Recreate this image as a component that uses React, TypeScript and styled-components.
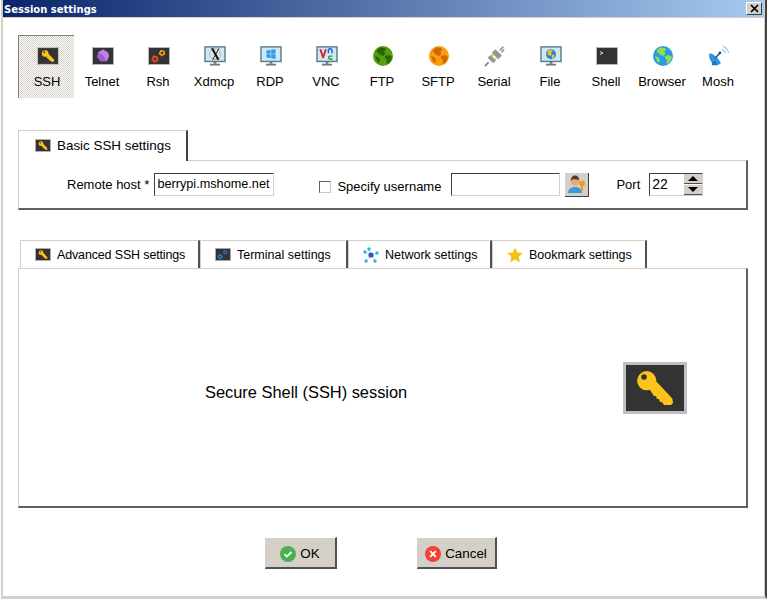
import React from "react";
import styled, { createGlobalStyle } from "styled-components";

const Global = createGlobalStyle`
  html, body { margin: 0; padding: 0; background: #fff; }
  body { font-family: "Liberation Sans", Arial, sans-serif; color: #000; }
`;

const Win = styled.div`
  width: 766px;
  height: 599px;
  margin-left: 1px;
  box-sizing: border-box;
  overflow: hidden;
  background: #fff;
  border-left: 2px solid #d4d0c8;
  border-right: 2px solid #404040;
  border-bottom: 3px solid #d4d0c8;
  display: flex;
  flex-direction: column;
`;

const TitleBar = styled.div`
  height: 18px;
  flex: none;
  box-sizing: border-box;
  margin-left: -1px;
  padding-left: 2px;
  background: linear-gradient(90deg, #0a246a, #a6caf0);
  border-bottom: 1px solid #d4d0c8;
  border-right: 1px solid #d4d0c8;
  display: flex;
  align-items: center;
  justify-content: space-between;
  color: #fff;
  font: bold 10px "DejaVu Sans", sans-serif;
`;

const TitleText = styled.span`
  margin-top: 1px;
`;

const CloseBtn = styled.div`
  width: 16px;
  height: 13px;
  margin-right: 2px;
  box-sizing: border-box;
  background: #d4d0c8;
  border: 1px solid;
  border-color: #fff #404040 #404040 #fff;
  display: flex;
  align-items: center;
  justify-content: center;
`;

const Content = styled.div`
  padding: 17px 0 0 15px;
  display: flex;
  flex-direction: column;
  flex: 1;
  border-right: 1px solid #d4d0c8;
`;

const Toolbar = styled.div`
  display: flex;
  height: 63px;
`;

const ToolItem = styled.div<{ $on?: boolean }>`
  width: 56px;
  box-sizing: border-box;
  height: 63px;
  padding-top: ${(p) => (p.$on ? 10 : 11)}px;
  display: flex;
  flex-direction: column;
  align-items: center;
  font-size: 13px;
  ${(p) =>
    p.$on
      ? `border-left: 1px solid #808080; border-top: 1px solid #808080;
         padding-left: 1px;
         background-color:#fff;
         background-image: conic-gradient(#d4d0c8 25%, #fff 0 50%, #d4d0c8 0 75%, #fff 0);
         background-size: 2px 2px;`
      : ""}
`;

const ToolIcon = styled.div`
  width: 24px;
  height: 20px;
  margin-left: 1px;
  display: flex;
  align-items: center;
  justify-content: center;
  svg { flex: none; }
`;

const ToolLabel = styled.div`
  margin-top: 8px;
  line-height: 16px;
  white-space: nowrap;
`;

const BasicTab = styled.div`
  margin-top: 32px;
  width: 170px;
  height: 31px;
  box-sizing: border-box;
  background: #fff;
  border-top: 1px solid #d4d0c8;
  border-left: 1px solid #d4d0c8;
  border-right: 2px solid #404040;
  display: flex;
  align-items: center;
  padding: 0 0 2px 16px;
  gap: 6px;
  font-size: 13.4px;
  position: relative;
  z-index: 1;
  margin-bottom: -1px;
`;

const BasicPanel = styled.div`
  width: 730px;
  height: 50px;
  box-sizing: border-box;
  border-top: 1px solid #d4d0c8;
  border-left: 1px solid #d4d0c8;
  border-right: 2px solid #606060;
  border-bottom: 2px solid #606060;
  display: flex;
  align-items: center;
  font-size: 13px;
`;

const FieldLabel = styled.span<{ $left: number; $right: number; $low?: boolean }>`
  margin-left: ${(p) => p.$left}px;
  margin-right: ${(p) => p.$right}px;
  margin-top: ${(p) => (p.$low ? 4 : 0)}px;
  white-space: nowrap;
`;

const SunkenInput = styled.div<{ $w: number }>`
  width: ${(p) => p.$w}px;
  height: 23px;
  box-sizing: border-box;
  border: 1px solid;
  border-color: #404040 #d4d0c8 #d4d0c8 #404040;
  padding-left: 2px;
  line-height: 20px;
  font-size: 12.7px;
  overflow: hidden;
  white-space: nowrap;
  background: #fff;
`;

const CheckBox = styled.div`
  width: 12px;
  height: 12px;
  margin-left: 45px;
  margin-right: 6px;
  margin-top: 4px;
  box-sizing: border-box;
  border: 1px solid;
  border-color: #606060 #c8c8c8 #c8c8c8 #606060;
`;

const UserBtn = styled.div`
  width: 24px;
  height: 24px;
  margin-left: 5px;
  box-sizing: border-box;
  background: #d4d0c8;
  border-right: 1px solid #404040;
  border-bottom: 1px solid #404040;
  display: flex;
  align-items: center;
  justify-content: center;
`;

const Spin = styled.div`
  width: 54px;
  height: 23px;
  box-sizing: border-box;
  border: 1px solid;
  border-color: #404040 #d4d0c8 #d4d0c8 #404040;
  display: flex;
  justify-content: space-between;
  padding-left: 2px;
  line-height: 20px;
  font-size: 14px;
`;

const SpinArrows = styled.div`
  width: 18px;
  display: flex;
  flex-direction: column;
  gap: 1px;
`;

const SpinBtn = styled.div`
  flex: 1;
  background: #d4d0c8;
  border-bottom: 1px solid #505050;
  display: flex;
  align-items: center;
  justify-content: center;
`;

const TabRow = styled.div`
  margin-top: 30px;
  margin-left: 2px;
  display: flex;
  height: 28px;
`;

const SettingTab = styled.div<{ $w: number; $tight?: boolean }>`
  width: ${(p) => p.$w}px;
  height: 28px;
  box-sizing: border-box;
  background: #fff;
  border-top: 1px solid #d4d0c8;
  border-left: 1px solid #d4d0c8;
  border-right: 2px solid #505050;
  display: flex;
  align-items: center;
  padding-left: 14px;
  gap: 6px;
  font-size: 12.5px;
  letter-spacing: ${(p) => (p.$tight ? "-0.15px" : "0")};
  white-space: nowrap;
`;

const MainPanel = styled.div`
  width: 730px;
  height: 240px;
  box-sizing: border-box;
  border-top: 1px solid #d4d0c8;
  border-left: 1px solid #d4d0c8;
  border-right: 2px solid #606060;
  border-bottom: 2px solid #606060;
  display: flex;
  align-items: center;
  justify-content: space-between;
  padding: 0 59px 0 186px;
`;

const MainText = styled.div`
  font-size: 16.4px;
  margin-top: 10px;
`;

const Footer = styled.div`
  display: flex;
  justify-content: center;
  gap: 80px;
  margin-top: 29px;
  padding-right: 21px;
`;

const ActionBtn = styled.div<{ $w: number }>`
  width: ${(p) => p.$w}px;
  height: 32px;
  box-sizing: border-box;
  background: #d4d0c8;
  border-top: 1px solid #fff;
  border-left: 1px solid #d4d0c8;
  border-right: 2px solid #505050;
  border-bottom: 2px solid #505050;
  padding-top: 2px;
  display: flex;
  align-items: center;
  justify-content: center;
  gap: 4px;
  font-size: 13.4px;
`;

const KeyBox = ({ size, h }: { size: number; h: number }) => (
  <svg width={size} height={h} viewBox="0 0 64 52">
    <rect x="1.5" y="1.5" width="61" height="49" fill="#333" stroke="#c0c0c0" strokeWidth="3" />
    <circle cx="23.7" cy="18.7" r="9.6" fill="#fdc31c" />
    <path d="M31 17L49.3 36.5 50 41 48 43H41L39 40H37L36 37H34L33 34H31L27 28Z" fill="#fdc31c" />
    <circle cx="21" cy="15" r="2.8" fill="#333" />
  </svg>
);

const Gear = ({ cx, cy, r, c }: { cx: number; cy: number; r: number; c: string }) => (
  <g>
    <circle cx={cx} cy={cy} r={r * 0.62} fill="none" stroke={c} strokeWidth={r * 0.5} />
    <circle cx={cx} cy={cy} r={r * 0.85} fill="none" stroke={c} strokeWidth={r * 0.34} strokeDasharray={`${r * 0.55} ${r * 0.55}`} />
  </g>
);

const Monitor = ({ children }: { children: React.ReactNode }) => (
  <svg width="22" height="20" viewBox="0 0 24 22">
    <rect x="1" y="1" width="22" height="16" fill="#cfe8f8" stroke="#5f7a88" strokeWidth="1.6" />
    <rect x="10.5" y="17" width="3" height="2.5" fill="#5f7a88" />
    <rect x="6.5" y="19.5" width="11" height="2" fill="#5f7a88" />
    {children}
  </svg>
);

const Globe = ({ c, land }: { c: string; land: string }) => (
  <svg width="20" height="20" viewBox="0 0 20 20">
    <circle cx="10" cy="10" r="10" fill={c} />
    <path d="M7 1.5l5 .5 1 2-2 1.5 1.5 2-2 2.5-3-1-3-2.5-1-2Z M12 10l4-1 3 2-1.5 4-2.5 3-1.5-1 .5-3-2-2Z M2 10l3 1 2 3-1 3-2-2Z" fill={land} />
  </svg>
);

const GearsIcon = ({ a, b, w = 22, h = 18 }: { a: string; b: string; w?: number; h?: number }) => (
  <svg width={w} height={h} viewBox="0 0 22 18">
    <rect x=".5" y=".5" width="21" height="17" fill="#333" stroke="#b8b8b8" />
    <Gear cx={7} cy={12} r={3.6} c={a} />
    <Gear cx={14} cy={6} r={3.2} c={b} />
  </svg>
);

const tools: [string, React.ReactNode][] = [
  ["SSH", <KeyBox size={22} h={18} />],
  [
    "Telnet",
    <svg width="22" height="18" viewBox="0 0 22 18">
      <rect x=".5" y=".5" width="21" height="17" fill="#333" stroke="#b8b8b8" />
      <path d="M11 2.5l5 3 1 4-2.5 5H8.5L5 10l1-4.5Z" fill="#a25bd0" />
      <path d="M11 2.5l5 3-4.5 3-5.5-3Z M16 5.5l1 4-2.5 5-3-6Z" fill="#bd82e4" />
    </svg>,
  ],
  ["Rsh", <GearsIcon a="#e4481a" b="#f59a14" />],
  [
    "Xdmcp",
    <Monitor>
      <circle cx="12" cy="9" r="6" fill="none" stroke="#e39a7a" strokeWidth="1" />
      <path d="M7.5 2.5h2.6L17 15h-2.6Z M9 15l7-12.5h1L10 15Z" fill="#111" />
    </Monitor>,
  ],
  [
    "RDP",
    <Monitor>
      <path d="M7 5l4.5-.7v4.2H7Z M12.2 4.2L17 3.5v5h-4.8Z M7 9.2h4.5v4.2L7 12.7Z M12.2 9.2H17v5l-4.8-.7Z" fill="#2f9bf0" />
    </Monitor>,
  ],
  [
    "VNC",
    <Monitor>
      <path d="M3.5 3.5h2.2l2 6 2-6h2.1L8.5 13.5H7Z" fill="#d81e1e" />
      <path d="M13.5 8V5a2 2 0 0 1 4 0v3" fill="none" stroke="#2a4fd0" strokeWidth="1.5" />
      <path d="M18 11.2h-3a1.6 1.6 0 0 0 0 3.1h3" fill="none" stroke="#18a018" strokeWidth="1.5" />
    </Monitor>,
  ],
  ["FTP", <Globe c="#4fa00c" land="#2d6306" />],
  ["SFTP", <Globe c="#ff9a0a" land="#c86a05" />],
  [
    "Serial",
    <svg width="22" height="22" viewBox="0 0 24 24">
      <path d="M1 23l4-4" stroke="#7d8a91" strokeWidth="2" />
      <path d="M4 14l6 6 3-3-6-6Z" fill="#8a979e" />
      <path d="M8.5 8.5l7 7 4-4-7-7Z" fill="#8a979e" />
      <path d="M7.5 11l1.8-1.6 2 2-1.6 1.8Z M11 15.5l2-2 1 1-2 2Z" fill="#f7c21f" />
      <path d="M17 6l4-4M19 8l3-3" stroke="#7d8a91" strokeWidth="1.6" />
    </svg>,
  ],
  [
    "File",
    <Monitor>
      <circle cx="12" cy="9" r="5.5" fill="#2f80d0" />
      <path d="M9 5l4-1 1 2-2 1 1 2-2 2-3-2Z M13 10l3-1-1 4-2 1Z" fill="#f2c42b" />
    </Monitor>,
  ],
  [
    "Shell",
    <svg width="22" height="18" viewBox="0 0 22 18">
      <rect x=".5" y=".5" width="21" height="17" fill="#333" stroke="#b8b8b8" />
      <path d="M4 4.5l3 1.5-3 1.5" fill="none" stroke="#ddd" strokeWidth="1" />
    </svg>,
  ],
  ["Browser", <Globe c="#2b9be8" land="#8fe04c" />],
  [
    "Mosh",
    <svg width="22" height="22" viewBox="0 0 24 24">
      <path d="M2 9c5 1 10 6 12 11-3 3-8 2-10-1S0 12 2 9Z" fill="#2b96e6" />
      <path d="M5 18l-1 4h7l-3-4Z" fill="#2b6fb0" />
      <path d="M8 14l5-5" stroke="#274a80" strokeWidth="1.6" />
      <circle cx="13" cy="8.5" r="1.5" fill="#274a80" />
      <path d="M15 5a5 5 0 0 1 4 4M16 1.5a9 9 0 0 1 6.5 7" fill="none" stroke="#9cc8e8" strokeWidth="1.2" />
    </svg>,
  ],
];

const NetIcon = () => (
  <svg width="16" height="16" viewBox="0 0 16 16">
    <g stroke="#c5d3ec" strokeWidth="1">
      <path d="M8 8L6 2M8 8L14 6M8 8L2 5M8 8L3 14M8 8L12 14" />
    </g>
    <circle cx="8" cy="8" r="2.6" fill="#3f51b5" />
    {[[6, 2], [14, 6], [2, 5], [3, 14], [12, 14]].map(([x, y]) => (
      <circle key={`${x}-${y}`} cx={x} cy={y} r="1.7" fill="#1cbcdc" />
    ))}
  </svg>
);

const StarIcon = () => (
  <svg width="16" height="16" viewBox="0 0 16 16">
    <path d="M8 .5l2.3 5 5.4.6-4 3.7 1.1 5.4L8 12.5 3.2 15.2l1.1-5.4-4-3.7 5.4-.6Z" fill="#f7c20f" />
  </svg>
);

const UserIcon = () => (
  <svg width="20" height="20" viewBox="0 0 20 20">
    <path d="M1 19c0-4 3-6 7-6s7 2 7 6Z" fill="#3a9ae0" />
    <circle cx="8" cy="7.5" r="4.2" fill="#e8a679" />
    <path d="M3.8 7c0-3.5 2-5.5 4.3-5.5s4.2 2 4.2 5.2C11 5 9 5.5 7 5.2 5.5 5 4.5 6 3.8 7Z" fill="#4c3a2e" />
    <circle cx="15" cy="9.5" r="3" fill="#f79a1a" />
    <path d="M14 11h2v6h-2Z" fill="#f79a1a" />
  </svg>
);

const Arrow = ({ up }: { up?: boolean }) => (
  <svg width="10" height="5" viewBox="0 0 10 5">
    <path d={up ? "M0 5L5 0l5 5Z" : "M0 0l5 5 5-5Z"} fill="#000" />
  </svg>
);

const App = () => (
  <Win>
    <Global />
    <TitleBar>
      <TitleText>Session settings</TitleText>
      <CloseBtn>
        <svg width="9" height="9" viewBox="0 0 9 9">
          <path d="M1 1l7 7M8 1L1 8" stroke="#000" strokeWidth="1.7" />
        </svg>
      </CloseBtn>
    </TitleBar>
    <Content>
      <Toolbar>
        {tools.map(([name, icon], i) => (
          <ToolItem key={name} $on={i === 0}>
            <ToolIcon>{icon}</ToolIcon>
            <ToolLabel>{name}</ToolLabel>
          </ToolItem>
        ))}
      </Toolbar>
      <BasicTab>
        <KeyBox size={16} h={13} />
        Basic SSH settings
      </BasicTab>
      <BasicPanel>
        <FieldLabel $left={48} $right={5}>Remote host *</FieldLabel>
        <SunkenInput $w={120}>berrypi.mshome.net</SunkenInput>
        <CheckBox />
        <FieldLabel $left={0} $right={10} $low>Specify username</FieldLabel>
        <SunkenInput $w={109} />
        <UserBtn><UserIcon /></UserBtn>
        <FieldLabel $left={27} $right={9}>Port</FieldLabel>
        <Spin>
          22
          <SpinArrows>
            <SpinBtn><Arrow up /></SpinBtn>
            <SpinBtn><Arrow /></SpinBtn>
          </SpinArrows>
        </Spin>
      </BasicPanel>
      <TabRow>
        <SettingTab $w={180} $tight><KeyBox size={16} h={13} />Advanced SSH settings</SettingTab>
        <SettingTab $w={148}><GearsIcon a="#2f7fd8" b="#3f63c8" w={16} h={13} />Terminal settings</SettingTab>
        <SettingTab $w={144}><NetIcon />Network settings</SettingTab>
        <SettingTab $w={155}><StarIcon />Bookmark settings</SettingTab>
      </TabRow>
      <MainPanel>
        <MainText>Secure Shell (SSH) session</MainText>
        <KeyBox size={64} h={52} />
      </MainPanel>
      <Footer>
        <ActionBtn $w={72}>
          <svg width="16" height="16" viewBox="0 0 16 16">
            <circle cx="8" cy="8" r="8" fill="#4caf50" />
            <path d="M4.5 8.2l2.4 2.4 4.6-4.6" fill="none" stroke="#fff" strokeWidth="1.8" />
          </svg>
          OK
        </ActionBtn>
        <ActionBtn $w={80}>
          <svg width="16" height="16" viewBox="0 0 16 16">
            <circle cx="8" cy="8" r="8" fill="#f44336" />
            <path d="M5.2 5.2l5.6 5.6M10.8 5.2l-5.6 5.6" stroke="#fff" strokeWidth="1.9" />
          </svg>
          Cancel
        </ActionBtn>
      </Footer>
    </Content>
  </Win>
);

export default App;
